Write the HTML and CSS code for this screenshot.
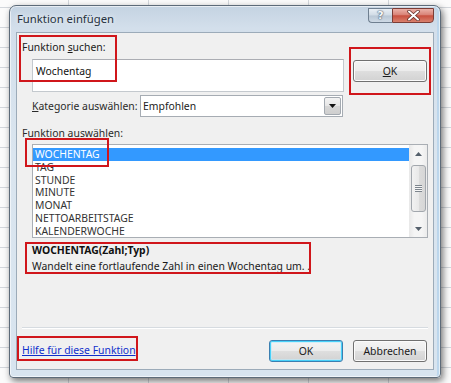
FILE: index.html
```html
<!DOCTYPE html>
<html lang="de">
<head>
<meta charset="utf-8">
<title>Funktion einfügen</title>
<link rel="stylesheet" href="styles.css">
</head>
<body>
<div class="window">
  <div class="titlebar">
    <span class="title">Funktion einfügen</span>
    <div class="caption">
      <div class="cap-btn cap-help"><span class="help-glyph">?</span></div>
      <div class="cap-btn cap-close">
        <svg width="13" height="11" viewBox="0 0 13 11"><path d="M2 1.5 L11 9.5 M11 1.5 L2 9.5" stroke="#5a2a24" stroke-width="3.4" stroke-linecap="round"/><path d="M2 1.5 L11 9.5 M11 1.5 L2 9.5" stroke="#ffffff" stroke-width="2" stroke-linecap="round"/></svg>
      </div>
    </div>
  </div>
  <div class="client">
    <div class="label">Funktion <u>s</u>uchen:</div>
    <div class="search-row">
      <div class="search-input">Wochentag</div>
      <div class="btn btn-ok"><span><u>O</u>K</span></div>
    </div>
    <div class="category-row">
      <span class="cat-label"><u>K</u>ategorie auswählen:</span>
      <div class="select">
        <span class="select-value">Empfohlen</span>
        <div class="select-arrow"><svg width="7" height="4" viewBox="0 0 7 4"><path d="M0 0 H7 L3.5 4Z" fill="#111"/></svg></div>
      </div>
    </div>
    <div class="label list-label">Funktion auswählen:</div>
    <div class="listbox">
      <ul class="items">
        <li class="selected">WOCHENTAG</li>
        <li>TAG</li>
        <li>STUNDE</li>
        <li>MINUTE</li>
        <li>MONAT</li>
        <li>NETTOARBEITSTAGE</li>
        <li>KALENDERWOCHE</li>
      </ul>
      <div class="scrollbar">
        <div class="sb-arrow"><svg width="7" height="4" viewBox="0 0 7 4"><path d="M0 4 L3.5 0 L7 4Z" fill="#55606c"/></svg></div>
        <div class="sb-thumb"><span class="grip"></span></div>
        <div class="sb-fill"></div>
        <div class="sb-arrow"><svg width="7" height="4" viewBox="0 0 7 4"><path d="M0 0 H7 L3.5 4Z" fill="#55606c"/></svg></div>
      </div>
    </div>
    <div class="desc">
      <div class="syntax">WOCHENTAG(Zahl;Typ)</div>
      <div class="desc-text">Wandelt eine fortlaufende Zahl in einen Wochentag um. .</div>
    </div>
    <div class="separator"></div>
    <div class="footer">
      <a class="help-link" href="#">Hilfe für diese Funktion</a>
      <div class="footer-buttons">
        <div class="btn btn-default"><span>OK</span></div>
        <div class="btn"><span>Abbrechen</span></div>
      </div>
    </div>
    <div class="mark mark-search"></div>
    <div class="mark mark-ok"></div>
    <div class="mark mark-item"></div>
    <div class="mark mark-desc"></div>
    <div class="mark mark-help"></div>
  </div>
</div>
</body>
</html>
```
FILE: styles.css
```css
* { box-sizing: border-box; }
html, body { margin: 0; }
body {
  width: 451px;
  height: 383px;
  overflow: hidden;
  padding: 5px 0 0 9px;
  font-family: "Noto Sans", "Open Sans", sans-serif;
  font-size: 10.4px;
  color: #1c1c1c;
  background-color: #fbfbfb;
  background-image:
    repeating-linear-gradient(90deg, transparent 0 68px, #d3d7dc 68px 69px, transparent 69px 80px),
    repeating-linear-gradient(180deg, transparent 0 7px, #d3d7dc 7px 8px, transparent 8px 20px);
}
u { text-decoration-thickness: 1px; text-underline-offset: 1px; }

.window {
  width: 432px;
  height: 373px;
  border: 1px solid #5d6b79;
  border-radius: 7px 7px 4px 4px;
  padding: 0 6px 7px 6px;
  background: linear-gradient(180deg, #c4d3e2 0%, #d3dfeb 6%, #dae5ef 40%, #d8e4ef 100%);
  box-shadow: 2px 3px 7px rgba(0,0,0,.55), inset 0 0 0 1px rgba(255,255,255,.6), inset -3px 0 0 #bcd6ec;
  display: flex;
  flex-direction: column;
}

.titlebar { height: 26px; display: flex; align-items: flex-start; }
.title {
  margin-top: 5px;
  padding-left: 1px;
  line-height: 16px;
  font-size: 11.3px;
  color: #26323e;
  text-shadow: 0 0 5px rgba(255,255,255,.95);
}
.caption { margin-left: auto; margin-top: 2px; display: flex; }
.cap-btn { height: 15px; display: flex; align-items: center; justify-content: center; }
.cap-help {
  width: 24px;
  border: 1px solid #6f7f90;
  border-right: none;
  border-radius: 0 0 0 4px;
  background: linear-gradient(180deg, #e9eff5 0%, #d0dbe6 48%, #b9c7d5 52%, #cfdae6 100%);
}
.help-glyph {
  font-family: "DejaVu Sans", sans-serif;
  font-weight: bold;
  font-size: 11px;
  line-height: 11px;
  color: #f4f7fa;
  text-shadow: 0 0 1px #59677a, 0 0 1px #59677a, 0 0 2px #59677a;
}
.cap-close {
  width: 42px;
  border: 1px solid #7b3d36;
  border-radius: 0 0 4px 0;
  background: linear-gradient(180deg, #ebb1a8 0%, #d98377 45%, #c8503f 52%, #d9806d 100%);
}

.client {
  position: relative;
  height: 338px;
  background: #f0f0f0;
  border: 1px solid #9cabb9;
  padding: 6px 5px 7px 5px;
  display: flex;
  flex-direction: column;
}

.label { line-height: 16px; height: 16px; color: #1a1a1a; }

.search-row { display: flex; margin-top: 4px; height: 33px; align-items: flex-start; }
.search-input {
  margin-left: 10px;
  width: 312px;
  height: 33px;
  background: #fff;
  border: 1px solid #c4c9ce;
  border-top-color: #abadb3;
  padding: 3px 0 0 3px;
  line-height: 16px;
  color: #111;
}
.btn {
  width: 74px;
  height: 22px;
  border: 1px solid #707070;
  border-radius: 3px;
  background: linear-gradient(180deg, #f4f4f4 0%, #ececec 48%, #dedede 52%, #d2d2d2 100%);
  box-shadow: inset 0 0 0 1px #fbfbfb;
  display: flex;
  align-items: center;
  justify-content: center;
  line-height: 14px;
  color: #1a1a1a;
}
.btn-ok { margin-left: 9px; margin-top: 1px; }

.category-row { display: flex; align-items: center; margin-top: 3px; height: 22px; padding-left: 10px; }
.cat-label { width: 108px; color: #2a2a2a; }
.select {
  width: 203px;
  height: 22px;
  background: #fff;
  border: 1px solid #a6acb3;
  display: flex;
  align-items: center;
  padding-left: 2px;
}
.select-value { flex: 1; color: #222; }
.select-arrow {
  width: 17px;
  height: 18px;
  margin-right: 1px;
  border: 1px solid #a3a9b0;
  border-radius: 2px;
  background: linear-gradient(180deg, #f3f3f3 0%, #e6e6e6 50%, #d6d6d6 52%, #cfcfcf 100%);
  display: flex;
  align-items: center;
  justify-content: center;
}

.list-label { margin-top: 8px; color: #2a2a2a; }

.listbox {
  margin-top: 3px;
  margin-left: 10px;
  width: 396px;
  height: 94px;
  border: 1px solid #a9aeb4;
  background: #fff;
  display: flex;
}
.items { list-style: none; margin: 0; padding: 3px 0 0 0; flex: 1; }
.items li { height: 12.75px; line-height: 12.75px; padding-left: 2px; color: #333; }
.items li.selected { background: #3399ff; color: #fff; }
.scrollbar {
  width: 18px;
  background: linear-gradient(90deg, #e8e8e8, #f5f5f5 30%, #f5f5f5 70%, #ececec);
  display: flex;
  flex-direction: column;
  align-items: center;
}
.sb-arrow { height: 17px; width: 100%; display: flex; align-items: center; justify-content: center; }
.sb-thumb {
  margin-top: 3px;
  width: 15px;
  height: 47px;
  border: 1px solid #a2a7ad;
  border-radius: 3px;
  background: linear-gradient(90deg, #f2f2f2 0%, #e9e9e9 50%, #dcdcdc 52%, #d6d6d6 100%);
  display: flex;
  align-items: center;
  justify-content: center;
}
.grip {
  width: 7px;
  height: 7px;
  background: repeating-linear-gradient(180deg, #7d858d 0 1px, #f6f6f6 1px 2px);
}
.sb-fill { flex: 1; }

.desc { margin-top: 4px; padding-left: 10px; }
.syntax { line-height: 16px; font-weight: bold; color: #111; }
.desc-text { line-height: 16px; color: #1a1a1a; }

.separator { margin-top: 53px; height: 2px; border-top: 1px solid #d6dbe0; border-bottom: 1px solid #ffffff; }

.footer { margin-top: 11px; height: 22px; display: flex; align-items: center; justify-content: space-between; }
.help-link { color: #0f2fcc; text-decoration: underline; text-underline-offset: 1px; padding-bottom: 3px; }
.footer-buttons { display: flex; gap: 10px; margin-right: 1px; }
.btn-default {
  border-color: #3c7fb1;
  box-shadow: inset 0 0 0 1px #48d1f9, inset 0 0 0 2px rgba(190,235,252,.6);
}

.mark { position: absolute; border: 2px solid #d0161b; }
.mark-search { left: 2px; top: 2px; width: 98px; height: 47px; }
.mark-ok { left: 332px; top: 14px; width: 82px; height: 48px; }
.mark-item { left: 8px; top: 105px; width: 84px; height: 29px; }
.mark-desc { left: 8px; top: 209px; width: 286px; height: 32px; }
.mark-help { left: 0; top: 303px; width: 121px; height: 25px; }
```
